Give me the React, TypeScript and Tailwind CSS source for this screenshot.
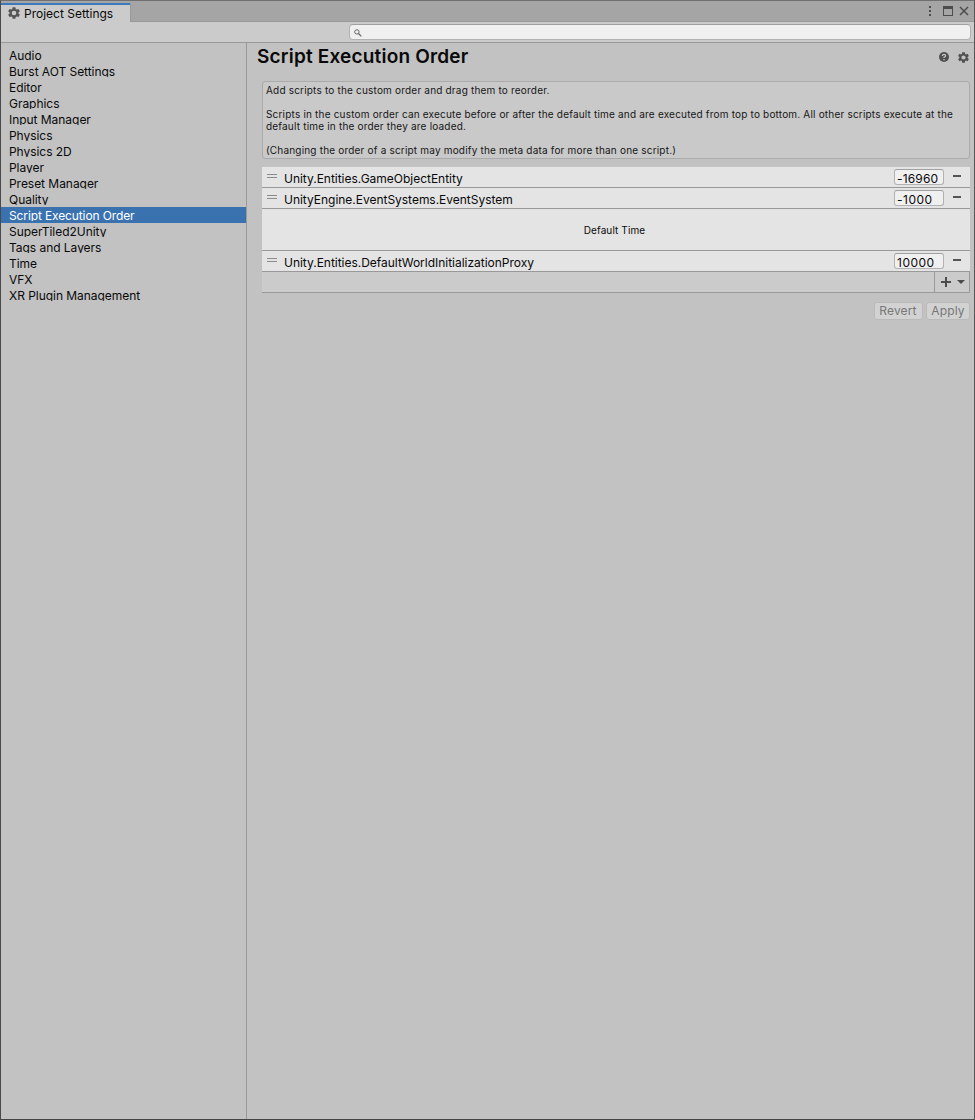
import React from "react";

const sections = [
  "Audio",
  "Burst AOT Settings",
  "Editor",
  "Graphics",
  "Input Manager",
  "Physics",
  "Physics 2D",
  "Player",
  "Preset Manager",
  "Quality",
  "Script Execution Order",
  "SuperTiled2Unity",
  "Tags and Layers",
  "Time",
  "VFX",
  "XR Plugin Management",
];

function Gear({ className }: { className: string }) {
  return (
    <svg className={className} viewBox="0 0 24 24" fill="currentColor">
      <path
        fillRule="evenodd"
        d="M9.2 0.5h5.6l.7 3.6 2 1.1 3.5-1.3 2.7 4.8-2.8 2.4v1.8l2.8 2.4-2.7 4.8-3.5-1.3-2 1.1-.7 3.6H9.2l-.7-3.6-2-1.1-3.5 1.3-2.7-4.8 2.8-2.4v-1.8L.3 8.7l2.7-4.8 3.5 1.3 2-1.1zM12 7.4a4.600 4.600 0 1 0 0 9.200a4.600 4.600 0 0 0 0-9.200z"
      />
    </svg>
  );
}

function ScriptRow({ name, order }: { name: string; order: string }) {
  return (
    <div className="flex h-[21px] border-b border-[#999999] bg-[#e4e4e4]">
      <div className="mt-[7px] ml-[5px] h-1 w-[10px] border-y border-[#8b8b8b]" />
      <div className="ml-[7px] flex-1 pt-1 text-[12px] leading-4 tracking-[-0.02px]">{name}</div>
      <div
        className={
          order.length > 5
            ? "mt-[2px] h-4 w-[50px] rounded-[3px] border border-[#b2b2b2] border-t-[#a0a0a0] bg-[#f0f0f0] pl-[2px] text-[12px] leading-[17px] tracking-[0.15px]"
            : "mt-[2px] h-4 w-[50px] rounded-[3px] border border-[#b2b2b2] border-t-[#a0a0a0] bg-[#f0f0f0] pl-[2px] text-[12px] leading-[17px] tracking-[0.5px]"
        }
      >
        {order}
      </div>
      <div className="mt-2 mr-[9px] ml-[9px] h-[2px] w-2 bg-[#555555]" />
    </div>
  );
}

export default function App() {
  return (
    <div className="flex h-[1120px] w-[975px] flex-col overflow-hidden border border-t-[#6f6f6f] border-r-[#555555] border-b-[#444444] border-l-[#4a4a4a] bg-[#c2c2c2] font-['Inter',sans-serif] text-[12px] text-[#090909]">
      <header className="flex h-[21px] shrink-0 bg-[#a5a5a5]">
        <div className="mt-[2px] flex h-[19px] w-[130px] rounded-tr-[2px] border-t-2 border-r border-t-[#3a79bb] border-r-[#999999] bg-[#cbcbcb]">
          <Gear className="mt-[2px] ml-[7px] h-3 w-3 text-[#555555]" />
          <span className="ml-1 leading-[17px] whitespace-nowrap">Project Settings</span>
        </div>
        <div className="flex flex-1 justify-end border-b border-[#999999] text-[#4c4c4c]">
          <svg className="mt-[3px] mr-[1px] h-[14px] w-[46px]" viewBox="0 0 46 14" fill="none">
            <path d="M2 2h2v2H2zM2 6h2v2H2zM2 10h2v2H2z" fill="currentColor" />
            <path d="M16 2h10v10H16z" fill="currentColor" />
            <path d="M17 5h8v6h-8z" fill="#a5a5a5" />
            <path d="M33 3l8 8M41 3l-8 8" stroke="currentColor" strokeWidth="1.500" />
          </svg>
        </div>
      </header>
      <div className="flex h-[21px] shrink-0 justify-end border-b border-[#999999] bg-[#cbcbcb] pt-[2px] pr-[3px]">
        <div className="h-4 w-[622px] rounded-[4px] border border-[#b2b2b2] border-t-[#a0a0a0] bg-[#f0f0f0]">
          <svg className="mt-1 ml-1 h-2 w-2 text-[#666666]" viewBox="0 0 8 8" fill="none" stroke="currentColor">
            <circle cx="2.900" cy="2.900" r="2.200" />
            <path d="M4.500 4.500L7.300 7.300" strokeWidth="1.200" />
          </svg>
        </div>
      </div>
      <div className="flex min-h-0 flex-1">
        <nav className="w-[246px] shrink-0 border-r border-[#999999] pt-1">
          {sections.map((section) => (
            <div
              key={section}
              className={
                section === "Script Execution Order"
                  ? "h-4 bg-[#3a72b0] pl-2 tracking-[-0.12px] text-white"
                  : "h-4 pl-2 tracking-[-0.04px]"
              }
            >
              <div className="h-[14px] overflow-hidden leading-[17px]">{section}</div>
            </div>
          ))}
        </nav>
        <main className="min-w-0 flex-1">
          <div className="flex h-[38px] pl-[10px]">
            <h1 className="flex-1 pt-[2px] text-[19px] leading-6 font-semibold tracking-[0.19px] whitespace-nowrap">
              Script Execution Order
            </h1>
            <svg className="mt-[9px] h-[10px] w-[10px]" viewBox="0 0 10 10" fill="none">
              <circle cx="5" cy="5" r="5" fill="#505050" />
              <path d="M3.400 3.900Q3.400 2.400 5 2.400T6.600 3.800Q6.600 4.700 5 5.300V6" stroke="#c8c8c8" strokeWidth="1.200" />
              <path d="M4.400 7h1.200v1.200H4.400z" fill="#c8c8c8" />
            </svg>
            <Gear className="mt-[9px] mr-[5.500px] ml-[8.500px] h-[11px] w-[11px] text-[#505050]" />
          </div>
          <div className="pr-1 pl-[15px]">
            <div className="h-[78px] rounded-[3px] border border-[#aaaaaa] bg-[#c9c9c9] pt-[2px] pl-[3px] text-[10px] leading-3 tracking-[0.19px] text-[#161616]">
              <p>Add scripts to the custom order and drag them to reorder.</p>
              <p className="mt-3 whitespace-nowrap">
                Scripts in the custom order can execute before or after the default time and are executed from top to bottom. All other scripts execute at the
                <br />
                default time in the order they are loaded.
              </p>
              <p className="mt-3">(Changing the order of a script may modify the meta data for more than one script.)</p>
            </div>
            <div className="mt-2">
              <ScriptRow name="Unity.Entities.GameObjectEntity" order="-16960" />
              <ScriptRow name="UnityEngine.EventSystems.EventSystem" order="-1000" />
              <div className="h-[42px] border-b border-[#999999] bg-[#e4e4e4] pr-[3px] text-center text-[10px] leading-[43px] tracking-[0.1px]">
                Default Time
              </div>
              <ScriptRow name="Unity.Entities.DefaultWorldInitializationProxy" order="10000" />
              <div className="flex h-[21px] justify-end border-r border-b border-[#999999] bg-[#cbcbcb]">
                <div className="w-[35px] border-l border-[#999999] text-[#4c4c4c]">
                  <svg className="mt-[3px] ml-[6px] h-[14px] w-[26px]" viewBox="0 0 26 14" fill="currentColor">
                    <path d="M4 2h2v4h4v2H6v4H4V8H0V6h4zM16 5h8l-4 4z" />
                  </svg>
                </div>
              </div>
            </div>
            <div className="mt-[9px] flex justify-end gap-[3px] text-center leading-4 tracking-[0.15px] text-[#777777]">
              <div className="h-[18px] w-[49px] rounded-[3px] border border-[#bababa] bg-[#d2d2d2] pr-px">Revert</div>
              <div className="h-[18px] w-11 rounded-[3px] border border-[#bababa] bg-[#d2d2d2]">Apply</div>
            </div>
          </div>
        </main>
      </div>
    </div>
  );
}
